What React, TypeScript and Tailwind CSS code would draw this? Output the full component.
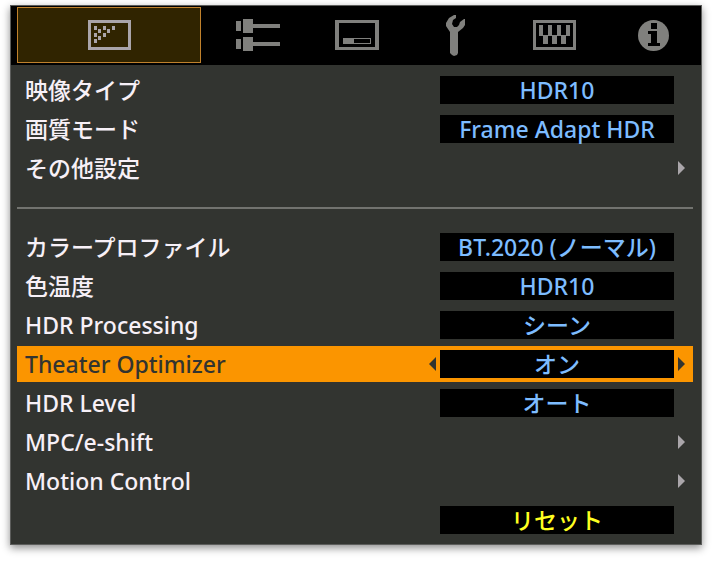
import React, { useState } from "react";

interface MenuItem {
  label: string;
  value?: string;
  submenu?: boolean;
}

const pictureItems: MenuItem[] = [
  { label: "映像タイプ", value: "HDR10" },
  { label: "画質モード", value: "Frame Adapt HDR" },
  { label: "その他設定", submenu: true },
];

const colorItems: MenuItem[] = [
  { label: "カラープロファイル", value: "BT.2020 (ノーマル)" },
  { label: "色温度", value: "HDR10" },
  { label: "HDR Processing", value: "シーン" },
  { label: "Theater Optimizer", value: "オン" },
  { label: "HDR Level", value: "オート" },
  { label: "MPC/e-shift", submenu: true },
  { label: "Motion Control", submenu: true },
];

function PictureIcon() {
  const dots = [
    [6, 6], [15, 6], [24, 6],
    [10, 9], [19, 9],
    [6, 13], [15, 13],
    [10, 16],
    [6, 19],
  ];
  return (
    <svg width="43" height="30" viewBox="0 0 43 30" shapeRendering="crispEdges" fill="#aaa5aa">
      <path fillRule="evenodd" d="M0 0h43v30H0zM3 3v24h37V3z" />
      {dots.map(([x, y]) => (
        <rect key={`${x}-${y}`} x={x} y={y} width="3" height="4" />
      ))}
    </svg>
  );
}

function InputIcon() {
  return (
    <svg width="44" height="32" viewBox="0 0 44 32" shapeRendering="crispEdges" fill="#80807d">
      <path d="M0 2h5v10H0zM7 0h10v5h27v4H17v5H7z" />
      <path d="M0 20h5v10H0zM7 18h10v5h27v4H17v5H7z" />
    </svg>
  );
}

function DisplayIcon() {
  return (
    <svg width="44" height="30" viewBox="0 0 44 30" shapeRendering="crispEdges" fill="#80807d">
      <path fillRule="evenodd" d="M0 0h44v30H0zM4 3v24h36V3z" />
      <path fillRule="evenodd" d="M8 18h28v6H8zM19 19v4h16v-4z" />
    </svg>
  );
}

function WrenchIcon() {
  return (
    <svg width="20" height="41" viewBox="0 0 20 41" fill="#80807d">
      <path d="M10 0H8L3 3L0 8V11L4 17V38L6 40L8 41L11 40L12 38V17L17 13L19 10V4H18L14 7L13 10L11 12H8L6 9L7 5L10 3Z" />
    </svg>
  );
}

function FunctionIcon() {
  return (
    <svg width="43" height="30" viewBox="0 0 43 30" shapeRendering="crispEdges" fill="#80807d">
      <path fillRule="evenodd" d="M0 0h43v30H0zM3 3v24h37V3z" />
      <path d="M6 5h4v10H6zM15 5h4v10h-4zM24 5h4v10h-4zM33 5h4v10h-4z" />
      <path d="M10 16h5v8h-5zM19 16h5v8h-5zM28 16h5v8h-5z" />
      <path d="M6 15h31v1H6z" />
    </svg>
  );
}

function InfoIcon() {
  return (
    <svg width="31" height="31" viewBox="0 0 31 31">
      <circle cx="15.5" cy="15.5" r="15.5" fill="#80807d" />
      <path d="M13 3h6v6h-6zM10 11h9v12h3v3H10v-3h3v-9h-3z" fill="#000" shapeRendering="crispEdges" />
    </svg>
  );
}

const tabs = [
  { name: "Input", icon: InputIcon },
  { name: "Display", icon: DisplayIcon },
  { name: "Installation", icon: WrenchIcon },
  { name: "Function", icon: FunctionIcon },
  { name: "Information", icon: InfoIcon },
];

function Arrow({ left = false, color }: { left?: boolean; color: string }) {
  return (
    <svg width="7" height="14" viewBox="0 0 7 14" fill={color}>
      <path d={left ? "M7 0v14L0 7z" : "M0 0v14l7-7z"} />
    </svg>
  );
}

function MenuRow({ item, selected, onSelect }: { item: MenuItem; selected: boolean; onSelect: () => void }) {
  const arrowColor = selected ? "#323430" : "#aaa6aa";
  return (
    <li className={`flex h-9 items-center pl-2 ${selected ? "bg-[#fb9500] text-[#323430]" : "text-[#f7f0f7]"}`}>
      <button type="button" onClick={onSelect} className="h-full flex-1 whitespace-nowrap text-left font-medium">
        {item.label}
      </button>
      {item.value && (
        <>
          {selected && (
            <button type="button" aria-label="Previous" className="pr-1">
              <Arrow left color={arrowColor} />
            </button>
          )}
          <button type="button" className="h-7 w-[234px] bg-black font-medium text-[#7dbcff]">
            {item.value}
          </button>
        </>
      )}
      <div className="flex w-[19px] justify-start pl-1">
        {(selected || item.submenu) && (
          <button type="button" aria-label={item.submenu ? `Open ${item.label}` : "Next"}>
            <Arrow color={arrowColor} />
          </button>
        )}
      </div>
    </li>
  );
}

export default function App() {
  const [active, setActive] = useState("Picture");
  const [selected, setSelected] = useState("Theater Optimizer");

  const tabColor = (name: string) => (active === name ? "border border-[#c0812c] bg-[#302400]" : "");

  const renderItem = (item: MenuItem) => (
    <MenuRow key={item.label} item={item} selected={selected === item.label} onSelect={() => setSelected(item.label)} />
  );

  return (
    <div className="min-h-screen bg-white pt-[5px] pr-[10px] pl-[10px] font-['Noto_Sans','Noto_Sans_CJK_JP',sans-serif] text-[23px] leading-7">
      <main className="border border-[#5c5d5b] bg-[#323430] shadow-[0_3px_8px_rgba(0,0,0,0.45)]">
        {/* Tab bar */}
        <nav className="flex h-[59px] items-start bg-black pt-px pl-[6px]">
          <button
            type="button"
            aria-label="Picture"
            onClick={() => setActive("Picture")}
            className={`flex h-14 w-[184px] items-center justify-center ${tabColor("Picture")}`}
          >
            <PictureIcon />
          </button>
          <div className="flex flex-1 justify-between pr-[18px] pl-[27px]">
            {tabs.map(({ name, icon: Icon }) => (
              <button
                key={name}
                type="button"
                aria-label={name}
                onClick={() => setActive(name)}
                className={`flex h-14 w-[60px] items-center justify-center ${tabColor(name)}`}
              >
                <Icon />
              </button>
            ))}
          </div>
        </nav>

        {/* Settings */}
        <div className="flex flex-col gap-[3px] pt-[7px] pr-2 pb-[6px] pl-[6px]">
          <ul className="flex flex-col gap-[3px]">{pictureItems.map(renderItem)}</ul>
          <div className="flex h-[37px] items-center">
            <hr className="w-full border-t-2 border-[#72736f]" />
          </div>
          <ul className="flex flex-col gap-[3px]">{colorItems.map(renderItem)}</ul>
          <div className="flex h-9 items-center justify-end pr-[19px]">
            <button type="button" className="h-7 w-[234px] bg-black font-medium text-[#ffff20]">
              リセット
            </button>
          </div>
        </div>
      </main>
    </div>
  );
}
